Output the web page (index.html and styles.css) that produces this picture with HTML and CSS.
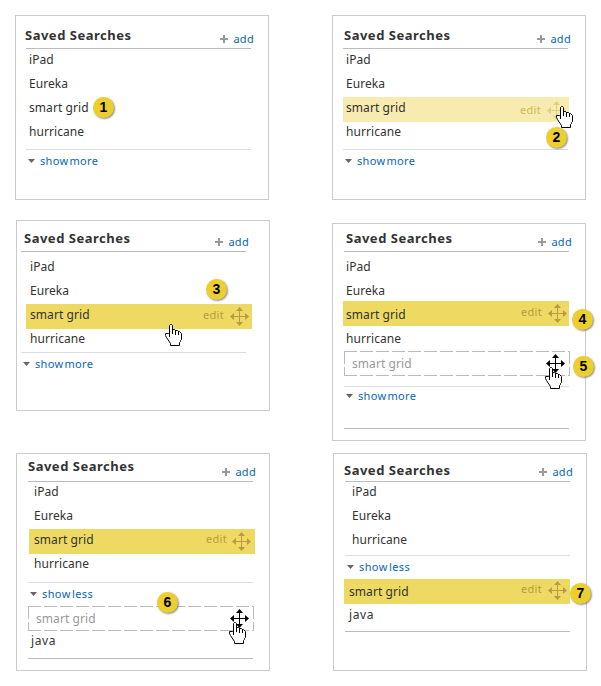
FILE: index.html
```
<!DOCTYPE html>
<html lang="en">
<head>
<meta charset="utf-8">
<title>Saved Searches</title>
<link rel="stylesheet" href="styles.css">
</head>
<body>
<svg class="defs" aria-hidden="true">
  <symbol id="move" viewBox="0 0 19 19"><path fill="currentColor" d="M9 3h1v13H9zM3 9h13v1H3zM9.5 0 13 4H6zM9.5 19 6 15h7zM0 9.5 4 6v7zM19 9.5 15 13V6z"/></symbol>
  <symbol id="hand" viewBox="0 0 17 22"><path fill="#fff" stroke="#000" d="M4.5 13V1.5l1-1h1l1 1v4h2l1 1h2l1 1h1l2 2v6l-1 1v1l-1 1v3h-9v-2l-4-6-1-2v-2h3l1 1"/><path fill="none" stroke="#000" d="M7.5 5v5M10.5 6v5M13.5 7v4"/></symbol>
</svg>
<main class="board">
  <div class="column">
    <section class="panel p1">
      <header class="head"><h2>Saved Searches</h2><a class="add"><i class="plus"></i><span>add</span></a></header>
      <ul class="list">
        <li><span>iPad</span></li><li><span>Eureka</span></li><li><span>smart grid</span></li><li><span>hurricane</span></li>
      </ul>
      <a class="more"><i class="caret"></i><span class="label">show more</span></a>
      <b class="badge">1</b>
    </section>
    <section class="panel p3">
      <header class="head"><h2>Saved Searches</h2><a class="add"><i class="plus"></i><span>add</span></a></header>
      <ul class="list">
        <li><span>iPad</span></li><li><span>Eureka</span></li>
        <li class="active"><span>smart grid</span><em class="edit">edit</em><svg class="move"><use href="#move"/></svg></li>
        <li><span>hurricane</span></li>
      </ul>
      <a class="more"><i class="caret"></i><span class="label">show more</span></a>
      <b class="badge">3</b><svg class="hand"><use href="#hand"/></svg>
    </section>
    <section class="panel p6">
      <header class="head"><h2>Saved Searches</h2><a class="add"><i class="plus"></i><span>add</span></a></header>
      <ul class="list">
        <li><span>iPad</span></li><li><span>Eureka</span></li>
        <li class="active"><span>smart grid</span><em class="edit">edit</em><svg class="move"><use href="#move"/></svg></li>
        <li><span>hurricane</span></li>
      </ul>
      <a class="more"><i class="caret"></i><span class="label less">show less</span></a>
      <div class="ghost"><span>smart grid</span><svg class="move"><use href="#move"/></svg></div>
      <ul class="list extra"><li><span class="java">java</span></li></ul>
      <b class="badge">6</b><svg class="hand"><use href="#hand"/></svg>
    </section>
  </div>
  <div class="column last">
    <section class="panel p2">
      <header class="head"><h2>Saved Searches</h2><a class="add"><i class="plus"></i><span>add</span></a></header>
      <ul class="list">
        <li><span>iPad</span></li><li><span>Eureka</span></li>
        <li class="active fading"><span>smart grid</span><em class="edit">edit</em><svg class="move"><use href="#move"/></svg></li>
        <li><span>hurricane</span></li>
      </ul>
      <a class="more"><i class="caret"></i><span class="label">show more</span></a>
      <b class="badge">2</b><svg class="hand"><use href="#hand"/></svg>
    </section>
    <section class="panel p4">
      <header class="head"><h2>Saved Searches</h2><a class="add"><i class="plus"></i><span>add</span></a></header>
      <ul class="list">
        <li><span>iPad</span></li><li><span>Eureka</span></li>
        <li class="active"><span>smart grid</span><em class="edit">edit</em><svg class="move"><use href="#move"/></svg></li>
        <li><span>hurricane</span></li>
      </ul>
      <div class="ghost"><span>smart grid</span><svg class="move"><use href="#move"/></svg></div>
      <a class="more"><i class="caret"></i><span class="label">show more</span></a>
      <hr class="end">
      <b class="badge">4</b><b class="badge second">5</b><svg class="hand"><use href="#hand"/></svg>
    </section>
    <section class="panel p7">
      <header class="head"><h2>Saved Searches</h2><a class="add"><i class="plus"></i><span>add</span></a></header>
      <ul class="list">
        <li><span>iPad</span></li><li><span>Eureka</span></li><li><span>hurricane</span></li>
      </ul>
      <a class="more"><i class="caret"></i><span class="label less">show less</span></a>
      <ul class="list extra">
        <li class="active"><span>smart grid</span><em class="edit">edit</em><svg class="move"><use href="#move"/></svg></li>
        <li><span class="java">java</span></li>
      </ul>
      <b class="badge">7</b>
    </section>
  </div>
</main>
</body>
</html>
```
FILE: styles.css
```
* { box-sizing: border-box; }
body { margin: 0; background: #fff; color: #333; font: 12px/20px "Noto Sans", sans-serif; letter-spacing: .07px; overflow: hidden; }
.defs { display: block; width: 0; height: 0; }
.board { display: flex; width: 601px; height: 686px; padding: 15px 0 0 15px; }
.column { width: 317px; flex: none; }
.column.last { width: 255px; }
.panel { position: relative; width: 254px; border: 1px solid #ccc; }
.head { display: flex; justify-content: space-between; width: 225px; height: 33px; border-bottom: 1px solid #bbb; }
h2 { margin: 0; font-size: 13px; line-height: 18px; font-weight: 700; letter-spacing: .5px; white-space: nowrap; }
.add { display: flex; gap: 5px; margin-right: -3px; font-size: 11px; letter-spacing: .3px; color: #0866b8; }
.plus { width: 8px; height: 8px; background: linear-gradient(#999, #999) 50% 50% / 8px 2px no-repeat, linear-gradient(#999, #999) 50% 50% / 2px 8px no-repeat; }
.list { list-style: none; margin: 0; padding: 0; width: 226px; }
.list li { display: flex; height: 24px; white-space: nowrap; }
.list span { line-height: 22px; }
.list .active { height: 25px; margin-bottom: -1px; background: #eeda62; color: #333; }
.active span { flex: 1; }
.edit { font-style: normal; font-size: 11px; letter-spacing: .3px; color: #b89b42; width: 27px; }
.move { width: 19px; height: 19px; color: #b89b42; flex: none; }
.list .fading { background: #f7ebb0; }
.fading .edit { color: #d1b755; }
.fading .move { color: #e2cf7c; }
.more { display: flex; width: 225px; border-top: 1px solid #ddd; font-size: 11px; line-height: 16px; color: #0866b8; }
.caret { width: 7px; height: 4px; background: #666; clip-path: polygon(0 0, 100% 0, 50% 100%); }
.label { letter-spacing: .3px; word-spacing: -2px; white-space: nowrap; }
.label.less { letter-spacing: .4px; }
.ghost { display: flex; justify-content: space-between; width: 226px; height: 25px; color: #999;
  background:
    repeating-linear-gradient(90deg, #bbb 0 13px, transparent 13px 16px) 0 0 / 100% 1px no-repeat,
    repeating-linear-gradient(90deg, #bbb 0 13px, transparent 13px 16px) 0 100% / 100% 1px no-repeat,
    repeating-linear-gradient(#bbb 0 13px, transparent 13px 16px) 0 0 / 1px 100% no-repeat,
    repeating-linear-gradient(#bbb 0 13px, transparent 13px 16px) 100% 0 / 1px 100% no-repeat; }
.ghost .move { color: #000; margin: 3px 5px 0 0; }
.end { width: 225px; height: 1px; margin: 0; border: 0; background: #bbb; }
.badge { position: absolute; width: 21px; height: 21px; border-radius: 50%; background: #eccf2f; box-shadow: 1px 1px 2px rgba(0,0,0,.45); font: bold 14px/20px "Liberation Sans", sans-serif; text-align: center; color: #000; }
.hand { position: absolute; width: 17px; height: 22px; }

.p1, .p2 { height: 185px; padding-left: 10px; }
.p1 .list span { padding-left: 3px; }
.p2 .list span { padding-left: 3px; }
.p2 h2 { padding-left: 1px; }
.p1 h2 { margin-left: -1px; }
.p1 h2, .p2 h2 { padding-top: 10px; }
.p1 .add, .p2 .add { padding-top: 13px; }
.add .plus { margin-top: 6px; }
.p1 .list, .p2 .list { height: 100px; }
.p1 .more, .p2 .more { padding: 3px 0 0 2px; }
.more .caret { margin: 6px 5px 0 0; }
.fading .edit { padding-top: 3px; }
.fading .move { margin: 4px 3px 0 0; }

.p3 { margin: 20px 0 0 1px; height: 191px; padding-left: 4px; }
.p3 .head { height: 31px; }
.p3 h2 { padding: 8px 0 0 3px; }
.p3 .add { padding-top: 11px; }
.p3 .list { margin-left: 5px; padding-top: 4px; height: 100px; }
.p3 .list span { padding-left: 4px; }
.p3 .edit { padding-top: 1px; }
.p3 .move { margin: 3px 3px 0 0; }
.p3 .more { padding: 3px 0 0 2px; }

.p4 { margin: 23px 0 0; height: 218px; padding-left: 11px; }
.p4 .head { height: 28px; }
.p4 h2 { padding: 5px 0 0 2px; }
.p4 .add { padding-top: 8px; }
.p4 .list { margin-left: -1px; padding-top: 4px; height: 99px; }
.p4 .list span { padding-left: 3px; }
.p4 .active { margin-top: -3px; margin-bottom: 2px; }
.p4 .active span { padding-top: 3px; }
.p4 .active .edit { padding-top: 1px; }
.p4 .active .move { margin: 3px 2px 0 0; }
.p4 .ghost { line-height: 26px; padding-left: 8px; }
.p4 .more { margin-top: 10px; padding: 1px 0 0 2px; }
.p4 .end { margin-top: 24px; }

.p6 { margin: 42px 0 0 1px; height: 218px; padding-left: 11px; }
.p6 .head { height: 28px; }
.p6 h2 { padding: 3px 0 0 0; }
.p6 .add { padding-top: 8px; }
.p6 .list { margin: -1px 0 0 1px; height: 100px; }
.p6 .list span { padding-left: 5px; }
.p6 .active .move { margin: 3px 4px 0 0; }
.p6 .active .edit { width: 26px; }
.p6 .more { margin-top: 1px; height: 24px; padding: 3px 0 0 2px; }
.p6 .ghost { line-height: 26px; padding-left: 8px; }
.p6 .list.extra { margin: -1px 0 0; width: 225px; height: 29px; border-bottom: 1px solid #bbb; }
.p6 .extra .java { padding-left: 3px; letter-spacing: .6px; }

.p7 { margin: 12px 0 0 1px; height: 218px; padding-left: 11px; }
.p7 .head { height: 28px; }
.p7 h2 { margin-left: -1px; padding-top: 7px; }
.p7 .add { padding-top: 8px; }
.p7 .list { margin-top: -1px; height: 74px; }
.p7 .list span { padding-left: 7px; }
.p7 .more { height: 24px; padding: 3px 0 0 2px; }
.p7 .list.extra { margin: 0; width: 225px; height: 53px; border-bottom: 1px solid #bbb; }
.p7 .extra .active { margin-left: -1px; width: 226px; flex: none; }
.p7 .extra .active span { padding: 2px 0 0 5px; }
.p7 .extra .java { padding: 1px 0 0 4px; letter-spacing: .6px; }
.p7 .move { margin: 2px 3px 0 0; }

.p1 .badge { left: 77px; top: 81px; }
.p2 .badge { left: 213px; top: 111px; }
.p2 .hand { left: 223px; top: 90px; }
.p3 .badge { left: 189px; top: 58px; }
.p3 .hand { left: 148px; top: 103px; }
.p4 .badge { left: 239px; top: 85px; }
.p4 .badge.second { left: 240px; top: 132px; }
.p4 .hand { left: 212px; top: 143px; }
.p6 .badge { left: 140px; top: 138px; }
.p6 .hand { left: 212px; top: 168px; }
.p7 .badge { left: 236px; top: 129px; }
```
